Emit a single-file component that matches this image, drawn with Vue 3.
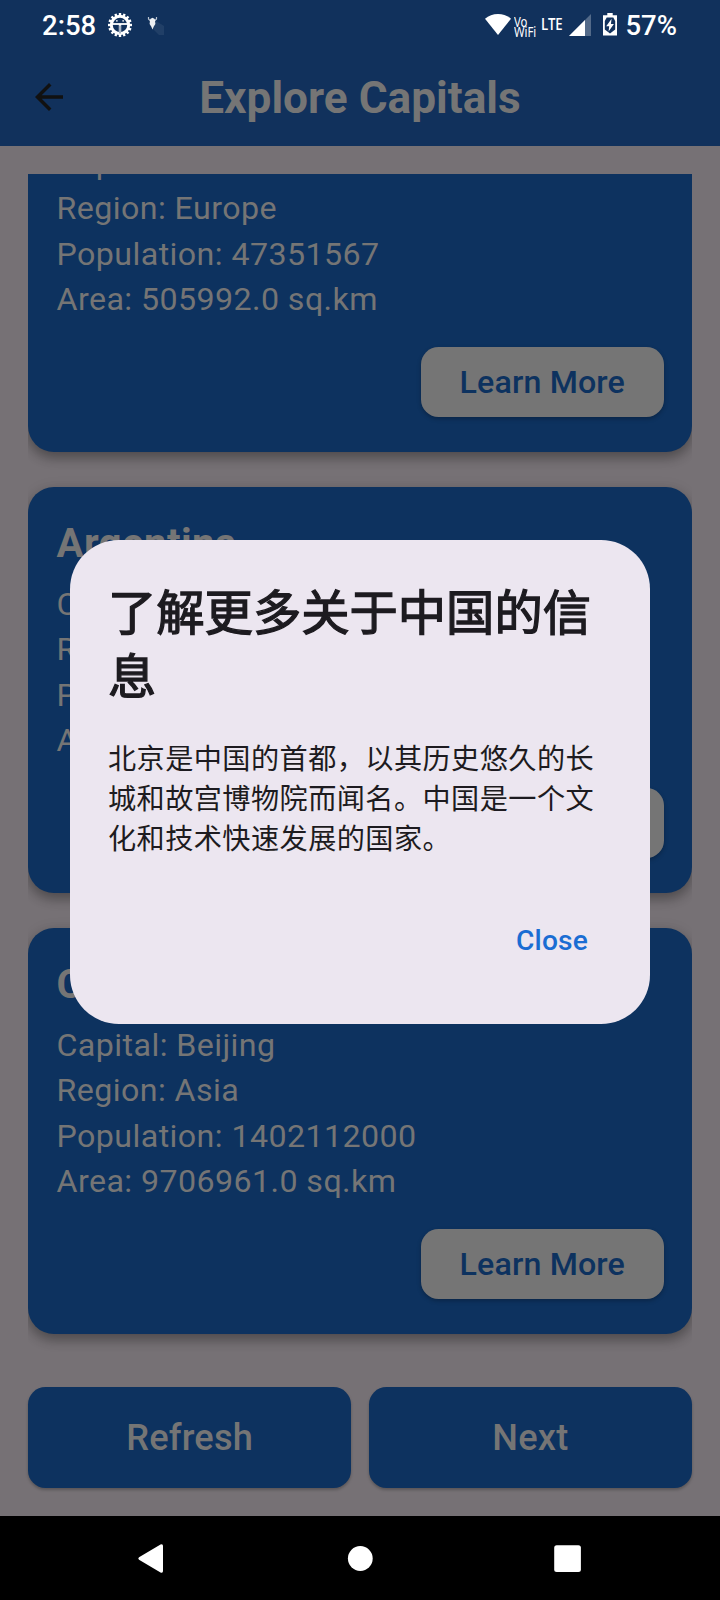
<script setup>
const countries = [
  { name: 'Spain', capital: 'Madrid', region: 'Europe', population: '47351567', area: '505992.0' },
  { name: 'Argentina', capital: 'Buenos Aires', region: 'Americas', population: '45376763', area: '2780400.0' },
  { name: 'China', capital: 'Beijing', region: 'Asia', population: '1402112000', area: '9706961.0' },
]
const teeth = Array.from({ length: 16 }, (_, i) => i * 22.5)
</script>

<template>
  <div class="screen">
    <header class="top">
      <div class="status">
        <span class="clock">2:58</span>
        <svg class="gear" width="26" height="26" viewBox="0 0 26 26">
          <g fill="#fff">
            <rect v-for="a in teeth" :key="a" x="11.8" y="1" width="2.4" height="3" :transform="`rotate(${a} 13 13)`" />
          </g>
          <circle cx="13" cy="13" r="8.700" fill="none" stroke="#fff" stroke-width="3" />
          <path d="M4 12h18" stroke="#fff" stroke-width="1.800" />
          <path d="M13 12v10" stroke="#fff" stroke-width="2.400" />
          <path d="M13 13.500v8" stroke="#11315c" stroke-width=".7" />
          <path d="M9 8.800h1.700M15.300 8.800h1.700" stroke="#fff" stroke-width="1.300" />
        </svg>
        <svg class="bug" width="20" height="22" viewBox="0 0 20 22">
          <path d="M9 7L17 12V21H12L6 15z" fill="#fff" opacity=".07" />
          <path d="M1.500 3v2l2 2M9.500 3v2l-2 2" fill="none" stroke="#fff" stroke-width="1.200" opacity=".7" />
          <path d="M3.200 5l2.300-1.300L7.800 5 8.400 10 6.800 12.500 5.500 15.500 4.200 12.500 2.600 10z" fill="#fff" opacity=".92" />
        </svg>
        <span class="fill"></span>
        <svg class="wifi" width="28" height="24" viewBox="0 0 28 24">
          <path d="M14 22L1 5.700C4.600 2.700 9 1 14 1S23.400 2.700 27 5.700z" fill="#fff" />
        </svg>
        <span class="vowifi"><span>Vo</span><span>WiFi</span></span>
        <span class="lte">LTE</span>
        <svg class="signal" width="22" height="22" viewBox="0 0 22 22">
          <path d="M22 0V22H0z" fill="#fff" opacity=".28" />
          <path d="M16 6V22H0z" fill="#fff" />
        </svg>
        <svg class="battery" width="14" height="24" viewBox="0 0 14 24">
          <path fill-rule="evenodd" d="M4.300 0h5.400v2.200H14V22.500H0V2.200h4.300z" fill="#fff" />
          <path d="M3.700 4.500h6.600L12.200 8v8.500L7 20.500 1.800 16.500V8z" fill="#11315c" />
          <path d="M8.600 5.800L3.200 13.200H6.200L5.600 18.500 10.900 11H7.900z" fill="#fff" />
        </svg>
        <span class="percent">57%</span>
      </div>
      <div class="appbar">
        <svg class="back" width="42" height="42" viewBox="0 0 24 24">
          <path d="M20 11H7.830l5.590-5.590L12 4l-8 8 8 8 1.410-1.410L7.830 13H20v-2z" fill="#111" />
        </svg>
        <h1>Explore Capitals</h1>
      </div>
    </header>

    <main class="body">
      <div class="list">
        <section v-for="c in countries" :key="c.name" class="card">
          <h2>{{ c.name }}</h2>
          <p>Capital: {{ c.capital }}</p>
          <p>Region: {{ c.region }}</p>
          <p>Population: {{ c.population }}</p>
          <p>Area: {{ c.area }} sq.km</p>
          <button class="learn">Learn More</button>
        </section>
      </div>
      <div class="actions">
        <button>Refresh</button>
        <button>Next</button>
      </div>
    </main>

    <nav class="navbar">
      <svg width="720" height="84" viewBox="0 0 720 84" fill="#fff">
        <path d="M139 41.300L160.500 28.500Q163 27.500 163 30V55Q163 57.500 160.500 56.500L139 43.700Q137.500 42.500 139 41.300z" />
        <circle cx="360.300" cy="42.500" r="12.400" />
        <rect x="554.200" y="29.200" width="26.700" height="26.700" rx="2.500" />
      </svg>
    </nav>

    <div class="dialog">
      <h3>了解更多关于中国的信息</h3>
      <p>北京是中国的首都，以其历史悠久的长城和故宫博物院而闻名。中国是一个文化和技术快速发展的国家。</p>
      <div class="dialog-actions"><button>Close</button></div>
    </div>
  </div>
</template>

<style>
body {
  margin: 0;
}
</style>

<style scoped>
.screen {
  position: relative;
  display: flex;
  flex-direction: column;
  width: 720px;
  height: 1600px;
  overflow: hidden;
  background: #767175;
  font-family: Roboto, "Noto Sans CJK SC", sans-serif;
}
h1, h2, h3, p {
  margin: 0;
}
button {
  border: 0;
  padding: 0;
  font-family: inherit;
}
.top {
  height: 146px;
  flex: none;
  background: #11315c;
}
.status {
  display: flex;
  align-items: center;
  height: 49px;
  padding: 0 43px 0 42px;
  color: #fff;
}
.clock, .percent {
  font-size: 27.5px;
  font-weight: 500;
  line-height: 32px;
  margin-top: 2px;
}
.gear {
  margin-left: 11px;
}
.bug {
  margin-left: 14px;
}
.fill {
  flex: 1;
}
.wifi {
  margin-right: 2px;
}
.vowifi {
  display: flex;
  flex-direction: column;
  width: 25px;
  margin: 4px 2px 0 0;
  font: 13.5px/10px "Noto Sans", sans-serif;
  transform: scaleX(0.84);
  transform-origin: left;
}
.lte {
  width: 24px;
  margin: -2px 4px 0 0;
  font: 600 16.5px/20px "Open Sans", sans-serif;
  letter-spacing: -0.3px;
  transform: scaleX(0.8);
  transform-origin: left;
}
.signal {
  margin-right: 12px;
}
.battery {
  margin-right: 8px;
}
.appbar {
  position: relative;
  display: flex;
  align-items: center;
  justify-content: center;
  height: 97px;
}
.back {
  position: absolute;
  left: 28px;
  top: 27px;
}
h1 {
  font-size: 44.2px;
  line-height: 52px;
  font-weight: 700;
  color: #757575;
}
.body {
  flex: 1;
  display: flex;
  flex-direction: column;
  padding: 28px;
  box-sizing: border-box;
}
.list {
  height: 1195px;
  overflow: hidden;
  display: flex;
  flex-direction: column;
  justify-content: flex-end;
  gap: 35px;
  padding-bottom: 35px;
  box-sizing: border-box;
}
.card {
  flex: none;
  display: flex;
  flex-direction: column;
  height: 406px;
  padding: 28px 28px 35px 28.500px;
  box-sizing: border-box;
  border-radius: 26px;
  background: #0d325f;
  box-shadow: 0 6px 12px rgba(0, 0, 0, 0.28), 0 3px 16px rgba(0, 0, 0, 0.1);
  color: #757575;
}
.card h2 {
  font-size: 40.25px;
  line-height: 48px;
  font-weight: 700;
  letter-spacing: 0.35px;
  margin: 5px 0 13.600px;
}
.card p {
  font-size: 32.2px;
  line-height: 45.500px;
  letter-spacing: 0.42px;
}
.learn {
  align-self: flex-end;
  margin-top: auto;
  width: 243.500px;
  height: 70px;
  border-radius: 17.500px;
  background: #757575;
  color: #0d325f;
  font-size: 32.2px;
  font-weight: 500;
  letter-spacing: 0.15px;
  box-shadow: 0 2px 4px rgba(0, 0, 0, 0.25);
}
.actions {
  display: flex;
  gap: 17.500px;
  margin-top: 17.500px;
}
.actions button {
  flex: 1;
  height: 101px;
  border-radius: 17.500px;
  background: #0d325f;
  color: #757575;
  font-size: 36.2px;
  font-weight: 500;
  letter-spacing: 0.175px;
  box-shadow: 0 2px 3px rgba(0, 0, 0, 0.25);
}
.navbar {
  flex: none;
  height: 84px;
  background: #000;
}
.navbar svg {
  display: block;
}
.dialog {
  position: absolute;
  left: 70px;
  top: 540px;
  width: 580px;
  height: 484px;
  box-sizing: border-box;
  padding: 41.500px 38px 0;
  border-radius: 49px;
  background: #ece6f0;
  color: #1d1b20;
}
.dialog h3 {
  font-size: 48.3px;
  line-height: 64.400px;
  font-weight: 400;
  -webkit-text-stroke: 1.3px #1d1b20;
}
.dialog p {
  margin-top: 29.500px;
  font-size: 28.175px;
  line-height: 40.250px;
  letter-spacing: 0.437px;
}
.dialog-actions {
  display: flex;
  justify-content: flex-end;
  margin-top: 62px;
  padding-right: 24px;
}
.dialog-actions button {
  background: none;
  color: #1a6dd3;
  font-size: 28.175px;
  line-height: 36px;
  font-weight: 500;
  letter-spacing: 0.175px;
}
</style>
